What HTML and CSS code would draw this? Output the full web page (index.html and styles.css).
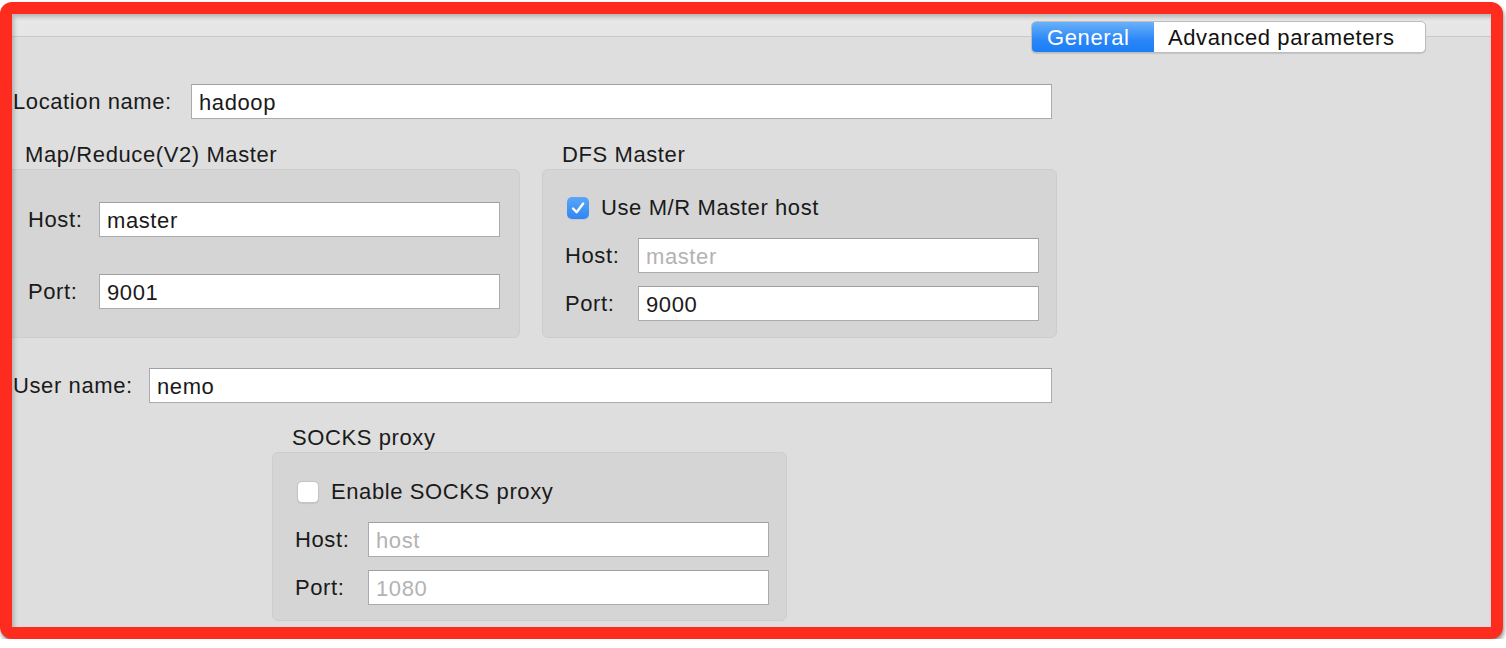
FILE: index.html
```html
<!DOCTYPE html>
<html>
<head>
<meta charset="utf-8">
<link rel="stylesheet" href="styles.css">
</head>
<body>
<div class="window">
  <div class="header">
    <div class="tabs">
      <div class="tab tab-active">General</div>
      <div class="tab tab-adv">Advanced parameters</div>
    </div>
  </div>
  <div class="form">
    <div class="row row-location">
      <label class="row-label label-location">Location name:</label>
      <input class="field field-location" type="text" value="hadoop">
    </div>

    <div class="groups">
      <div class="group group-mr">
        <div class="group-title">Map/Reduce(V2) Master</div>
        <div class="group-box box-mr">
          <div class="field-row">
            <span class="field-label">Host:</span>
            <input class="field field-small" type="text" value="master">
          </div>
          <div class="field-row row-gap-mr">
            <span class="field-label">Port:</span>
            <input class="field field-small" type="text" value="9001">
          </div>
        </div>
      </div>

      <div class="group">
        <div class="group-title">DFS Master</div>
        <div class="group-box box-check">
          <div class="check-row">
            <span class="checkbox checked">
              <svg width="22" height="22" viewBox="0 0 22 22"><path d="M6 11.5 L9.6 15.2 L16.2 6.6" fill="none" stroke="#fff" stroke-width="2.4" stroke-linecap="round" stroke-linejoin="round"/></svg>
            </span>
            <span class="check-text">Use M/R Master host</span>
          </div>
          <div class="field-row">
            <span class="field-label">Host:</span>
            <input class="field field-small field-disabled" type="text" value="master">
          </div>
          <div class="field-row row-gap">
            <span class="field-label">Port:</span>
            <input class="field field-small" type="text" value="9000">
          </div>
        </div>
      </div>
    </div>

    <div class="row row-user">
      <label class="row-label label-user">User name:</label>
      <input class="field field-user" type="text" value="nemo">
    </div>

    <div class="socks">
      <div class="group">
        <div class="group-title">SOCKS proxy</div>
        <div class="group-box box-check box-socks">
          <div class="check-row">
            <span class="checkbox"></span>
            <span class="check-text">Enable SOCKS proxy</span>
          </div>
          <div class="field-row">
            <span class="field-label">Host:</span>
            <input class="field field-small field-disabled" type="text" value="host">
          </div>
          <div class="field-row row-gap">
            <span class="field-label">Port:</span>
            <input class="field field-small field-disabled" type="text" value="1080">
          </div>
        </div>
      </div>
    </div>
  </div>
</div>
</body>
</html>
```

FILE: styles.css
```css
* { box-sizing: border-box; }

html, body {
  margin: 0;
  padding: 0;
  background: #ffffff;
}

body {
  font-family: "Liberation Sans", Helvetica, Arial, sans-serif;
  font-size: 22px;
  color: #1a1a1a;
  letter-spacing: 0.6px;
}

.window {
  margin-top: 2px;
  width: 1503px;
  height: 637px;
  border: 12px solid #fe2b1f;
  border-radius: 12px;
  background: #dedede;
  overflow: hidden;
  position: relative;
  box-shadow: 1px 3px 4px rgba(0, 0, 0, 0.45);
}

.window::after {
  content: "";
  position: absolute;
  inset: 0;
  pointer-events: none;
  box-shadow: inset 2px 3px 4px rgba(0, 0, 0, 0.22);
}

.header {
  height: 40px;
  background: linear-gradient(#e8e8e8 0, #e6e6e6 22px, #c9c9c9 22px, #c9c9c9 23px, transparent 23px);
  display: flex;
  justify-content: flex-end;
  padding-top: 7px;
  padding-right: 65px;
}

.tabs {
  display: flex;
  height: 32px;
  border-radius: 5px;
  overflow: hidden;
  background: #ffffff;
  border: 1px solid #bdbdbd;
  box-shadow: 0 1px 1px rgba(0, 0, 0, 0.12);
}

.tab {
  line-height: 32px;
  font-size: 22px;
  color: #111;
  white-space: nowrap;
}

.tab-active {
  width: 123px;
  padding-left: 16px;
  color: #ffffff;
  background: linear-gradient(#6db3fa, #2a86f7 60%, #1a7df6);
  margin: -1px 0 -1px -1px;
  line-height: 34px;
  height: 32px;
}

.tab-adv {
  width: 271px;
  padding-left: 14px;
}

.form {
  padding-left: 1px;
}

.row {
  display: flex;
  align-items: center;
}

.row-location { margin-top: 30px; }
.row-user { margin-top: 30px; }

.row-label {
  white-space: nowrap;
  flex: none;
}

.label-location { width: 178px; }
.label-user { width: 136px; }

.field {
  height: 35px;
  border: 1px solid #ababab;
  border-top-color: #a0a0a0;
  background: #ffffff;
  font-family: "Liberation Sans", Helvetica, Arial, sans-serif;
  font-size: 22px;
  letter-spacing: 0.6px;
  color: #1a1a1a;
  padding: 2px 0 0 7px;
  margin: 0;
  outline: none;
  border-radius: 0;
}

.field-location { width: 861px; }
.field-user { width: 903px; }
.field-small { width: 401px; }
.field-disabled { color: #b3b3b3; }

.groups {
  display: flex;
  gap: 22px;
  margin-top: 23px;
}

.group {
  width: 515px;
  flex: none;
}

.group-mr { margin-left: -8px; }

.group-title {
  line-height: 26px;
  height: 26px;
  padding-left: 20px;
  margin-bottom: 1px;
  white-space: nowrap;
}

.group-box {
  height: 169px;
  background: #d5d5d5;
  border: 1px solid #cdcdcd;
  border-radius: 6px;
  padding-left: 22px;
}

.box-mr { padding-top: 32px; }
.box-mr .field-label { width: 71px; }

.box-check { padding-top: 26px; }

.field-row {
  display: flex;
  align-items: center;
}

.field-label {
  width: 73px;
  flex: none;
}

.row-gap { margin-top: 13px; }
.row-gap-mr { margin-top: 37px; }

.check-row {
  display: flex;
  align-items: center;
  height: 24px;
  margin-left: 2px;
  margin-bottom: 18px;
}

.checkbox {
  width: 22px;
  height: 22px;
  border-radius: 5px;
  background: #ffffff;
  border: 1px solid #c4c4c4;
  box-shadow: 0 1px 1px rgba(0, 0, 0, 0.08);
  margin-right: 12px;
  flex: none;
  display: flex;
}

.checkbox.checked {
  border: none;
  background: linear-gradient(#5aa6f8, #2f86f3);
}

.socks {
  margin-top: 22px;
  margin-left: 259px;
}

.box-socks { padding-top: 27px; }
```
